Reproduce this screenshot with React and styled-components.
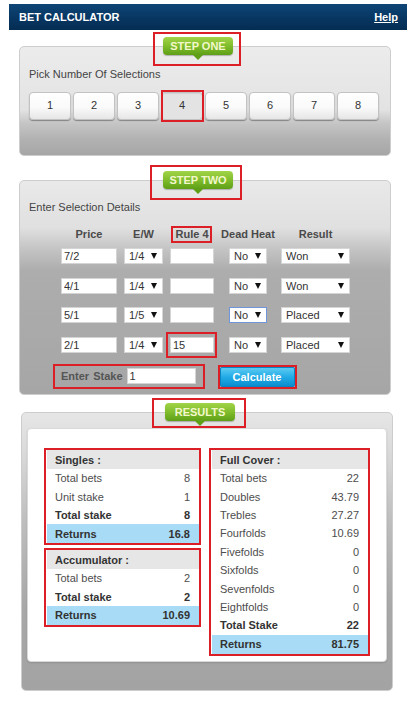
import React from 'react';
import styled, { createGlobalStyle, css } from 'styled-components';

const Global = createGlobalStyle`
  html, body { margin: 0; padding: 0; background: #fff; }
  body {
    font-family: "Liberation Sans", Arial, sans-serif;
    font-size: 11px;
    color: #444;
  }
  * { box-sizing: border-box; }
`;

const markCss = css`
  &::after {
    content: '';
    position: absolute;
    pointer-events: none;
    border: 2px solid #dc1f26;
    top: ${(p) => p.$m[0]}px;
    right: ${(p) => p.$m[1]}px;
    bottom: ${(p) => p.$m[2]}px;
    left: ${(p) => p.$m[3]}px;
  }
`;

const Page = styled.div`
  width: 414px;
  padding-top: 4px;
  padding-bottom: 29px;
`;

const TopBar = styled.header`
  margin-left: 9px;
  width: 398px;
  height: 26px;
  display: flex;
  align-items: center;
  justify-content: space-between;
  padding: 0 9px 0 10px;
  background: linear-gradient(to bottom, #0e4677 0%, #083763 50%, #052d53 100%);
  color: #fff;
  font-weight: bold;
  font-size: 11px;
`;

const Title = styled.span`
  letter-spacing: 0;
`;

const HelpLink = styled.a`
  color: #fff;
  font-weight: bold;
  text-decoration: underline;
`;

const Panel = styled.section`
  position: relative;
  width: 372px;
  margin-left: ${(p) => p.$left}px;
  margin-top: ${(p) => p.$top}px;
  border: 1px solid #cdcdcd;
  border-radius: 5px;
`;

const StepOnePanel = styled(Panel)`
  height: 110px;
  padding: 21px 9px 0 9px;
  background: linear-gradient(
    to bottom,
    #ececec 0%,
    #e3e3e3 58%,
    #c6c6c6 70%,
    #b2b2b2 85%,
    #a6a6a6 100%
  );
`;

const StepTwoPanel = styled(Panel)`
  height: 215px;
  padding: 20px 9px 0 9px;
  background: linear-gradient(
    to bottom,
    #e9e9e9 0%,
    #e0e0e0 22%,
    #c4c4c4 32%,
    #adadad 42%,
    #a6a6a6 100%
  );
`;

const ResultsPanel = styled(Panel)`
  padding: 15px 5px 28px 5px;
  background: linear-gradient(
    to bottom,
    #e6e6e6 0%,
    #dcdcdc 12%,
    #bdbdbd 40%,
    #a8a8a8 70%,
    #a3a3a3 100%
  );
`;

const Badge = styled.div`
  position: absolute;
  top: -10px;
  left: 143px;
  width: 70px;
  height: 18px;
  border-radius: 4px;
  background: linear-gradient(to bottom, #a2d448 0%, #80bd2c 50%, #5e9f17 100%);
  box-shadow: 0 1px 1px rgba(0, 0, 0, 0.25);
  color: #f3f8cc;
  font-weight: bold;
  font-size: 11px;
  display: flex;
  align-items: center;
  justify-content: center;
  &::before {
    content: '';
    position: absolute;
    left: 50%;
    bottom: -5px;
    margin-left: -5px;
    border-left: 5px solid transparent;
    border-right: 5px solid transparent;
    border-top: 5px solid #5f9f18;
  }
  ${markCss}
`;

const Caption = styled.div`
  line-height: 13px;
  color: #444;
`;

const NumRow = styled.div`
  display: flex;
  gap: 2px;
  margin-top: 11px;
`;

const NumButton = styled.button`
  position: relative;
  width: 42px;
  height: 28px;
  padding: 0 0 2px 0;
  font-family: inherit;
  font-size: 11px;
  color: #333;
  border: 1px solid #c2c2c2;
  border-radius: 4px;
  background: ${(p) =>
    p.$active
      ? '#e3e3e3'
      : 'linear-gradient(to bottom, #ffffff 0%, #fafafa 55%, #e6e6e6 100%)'};
  box-shadow: ${(p) =>
    p.$active ? 'inset 0 1px 1px rgba(0,0,0,0.08)' : '0 1px 1px rgba(0, 0, 0, 0.35)'};
  ${(p) => p.$active && markCss}
`;

const Grid = styled.div`
  display: grid;
  grid-template-columns: 60px 49px 48px 64px 71px;
  justify-items: center;
  align-items: center;
  margin-left: 30px;
`;

const HeadGrid = styled(Grid)`
  height: 17px;
  margin-top: 12px;
`;

const RowsGrid = styled(Grid)`
  row-gap: 13.7px;
  margin-top: 5px;
`;

const ColHead = styled.div`
  position: relative;
  font-weight: bold;
  color: #4a4a4a;
  line-height: 13px;
  ${(p) => p.$m && markCss}
`;

const TextInput = styled.input`
  display: block;
  width: ${(p) => p.$w}px;
  height: 16px;
  margin: 0;
  padding: 0 2px;
  border: 1px solid #d4d4d4;
  background: #fff;
  font-family: inherit;
  font-size: 11px;
  color: #333;
  outline: none;
`;

const MarkWrap = styled.div`
  position: relative;
  ${markCss}
`;

const Select = styled.div`
  width: ${(p) => p.$w}px;
  height: 16px;
  display: flex;
  align-items: center;
  justify-content: space-between;
  padding: 0 5px 0 4px;
  background: #fff;
  border: 1px solid ${(p) => (p.$focus ? '#7096d9' : '#d6d6d6')};
  color: #333;
  font-size: 11px;
`;

const Arrow = styled.span`
  width: 0;
  height: 0;
  border-left: 3.5px solid transparent;
  border-right: 3.5px solid transparent;
  border-top: 6px solid #111;
`;

const StakeRow = styled.div`
  display: flex;
  align-items: flex-start;
  gap: 13px;
  margin-top: 11px;
  margin-left: 24px;
`;

const StakeBox = styled.div`
  display: flex;
  align-items: center;
  gap: 4px;
  border: 2px solid #dc1f26;
  padding: 2px 7px 3px 6px;
`;

const StakeLabel = styled.span`
  font-weight: bold;
  color: #555;
  word-spacing: 1px;
`;

const CalcFrame = styled.div`
  border: 2px solid #dc1f26;
  margin-top: 1px;
`;

const CalcButton = styled.button`
  display: block;
  width: 75px;
  height: 20px;
  margin: 0;
  padding: 0;
  border: 1px solid #0b84c4;
  border-radius: 2px;
  background: linear-gradient(to bottom, #5ccaf2 0%, #22abe6 50%, #0b8dd0 100%);
  color: #fff;
  font-family: inherit;
  font-weight: bold;
  font-size: 11px;
`;

const Card = styled.div`
  display: flex;
  align-items: flex-start;
  gap: 8px;
  padding: 19px 15px 5px 16px;
  background: #fff;
  border: 1px solid #d9d9d9;
  border-radius: 4px;
  box-shadow: 0 1px 2px rgba(0, 0, 0, 0.12);
`;

const Col = styled.div`
  display: flex;
  flex-direction: column;
  gap: 3px;
  width: ${(p) => p.$w}px;
`;

const Box = styled.div`
  border: 2px solid #dc1f26;
  padding: 0 0 0 1px;
  background: #fff;
`;

const BoxHead = styled.div`
  height: 19px;
  display: flex;
  align-items: center;
  padding-left: 8px;
  background: #e6e6e6;
  font-weight: bold;
  color: #333;
`;

const Line = styled.div`
  height: ${(p) => (p.$hl ? 19 : 18.4)}px;
  display: flex;
  align-items: center;
  justify-content: space-between;
  padding: 0 9px 0 8px;
  background: ${(p) => (p.$hl ? '#a8dcf6' : 'transparent')};
  font-weight: ${(p) => (p.$bold ? 'bold' : 'normal')};
  color: ${(p) => (p.$bold ? '#333' : '#4d4d4d')};
`;

const selections = [
  { price: '7/2', ew: '1/4', r4: '', dh: 'No', res: 'Won' },
  { price: '4/1', ew: '1/4', r4: '', dh: 'No', res: 'Won' },
  { price: '5/1', ew: '1/5', r4: '', dh: 'No', res: 'Placed', focus: true },
  { price: '2/1', ew: '1/4', r4: '15', dh: 'No', res: 'Placed', mark: true },
];

const singles = [
  ['Total bets', '8'],
  ['Unit stake', '1'],
  ['Total stake', '8', 'b'],
  ['Returns', '16.8', 'h'],
];

const accumulator = [
  ['Total bets', '2'],
  ['Total stake', '2', 'b'],
  ['Returns', '10.69', 'h'],
];

const fullCover = [
  ['Total bets', '22'],
  ['Doubles', '43.79'],
  ['Trebles', '27.27'],
  ['Fourfolds', '10.69'],
  ['Fivefolds', '0'],
  ['Sixfolds', '0'],
  ['Sevenfolds', '0'],
  ['Eightfolds', '0'],
  ['Total Stake', '22', 'b'],
  ['Returns', '81.75', 'h'],
];

function ResultBox({ title, rows }) {
  return (
    <Box>
      <BoxHead>{title}</BoxHead>
      {rows.map(([label, value, kind]) => (
        <Line key={label} $bold={kind === 'b' || kind === 'h'} $hl={kind === 'h'}>
          <span>{label}</span>
          <span>{value}</span>
        </Line>
      ))}
    </Box>
  );
}

export default function App() {
  return (
    <>
      <Global />
      <Page>
        <TopBar>
          <Title>BET CALCULATOR</Title>
          <HelpLink>Help</HelpLink>
        </TopBar>

        <StepOnePanel $left={19} $top={16}>
          <Badge $m={[-5, -8, -11, -10]}>STEP ONE</Badge>
          <Caption>Pick Number Of Selections</Caption>
          <NumRow>
            {[1, 2, 3, 4, 5, 6, 7, 8].map((n) => (
              <NumButton key={n} $active={n === 4} $m={[-3, -2, -3, -1]}>
                {n}
              </NumButton>
            ))}
          </NumRow>
        </StepOnePanel>

        <StepTwoPanel $left={19} $top={24}>
          <Badge $m={[-6, -9, -11, -13]}>STEP TWO</Badge>
          <Caption>Enter Selection Details</Caption>
          <HeadGrid>
            <ColHead>Price</ColHead>
            <ColHead>E/W</ColHead>
            <ColHead $m={[-2, -3, -2, -4]}>Rule 4</ColHead>
            <ColHead>Dead Heat</ColHead>
            <ColHead>Result</ColHead>
          </HeadGrid>
          <RowsGrid>
            {selections.map((s, i) => (
              <React.Fragment key={i}>
                <TextInput $w={56} value={s.price} readOnly />
                <Select $w={39}>
                  <span>{s.ew}</span>
                  <Arrow />
                </Select>
                {s.mark ? (
                  <MarkWrap $m={[-5, -3, -5, -4]}>
                    <TextInput $w={44} value={s.r4} readOnly />
                  </MarkWrap>
                ) : (
                  <TextInput $w={44} value={s.r4} readOnly />
                )}
                <Select $w={38} $focus={s.focus}>
                  <span>{s.dh}</span>
                  <Arrow />
                </Select>
                <Select $w={69}>
                  <span>{s.res}</span>
                  <Arrow />
                </Select>
              </React.Fragment>
            ))}
          </RowsGrid>
          <StakeRow>
            <StakeBox>
              <StakeLabel>Enter Stake</StakeLabel>
              <TextInput $w={69} value="1" readOnly />
            </StakeBox>
            <CalcFrame>
              <CalcButton>Calculate</CalcButton>
            </CalcFrame>
          </StakeRow>
        </StepTwoPanel>

        <ResultsPanel $left={21} $top={17}>
          <Badge $m={[-5, -11, -7, -13]}>RESULTS</Badge>
          <Card>
            <Col $w={157}>
              <ResultBox title="Singles :" rows={singles} />
              <ResultBox title="Accumulator :" rows={accumulator} />
            </Col>
            <Col $w={161}>
              <ResultBox title="Full Cover :" rows={fullCover} />
            </Col>
          </Card>
        </ResultsPanel>
      </Page>
    </>
  );
}
